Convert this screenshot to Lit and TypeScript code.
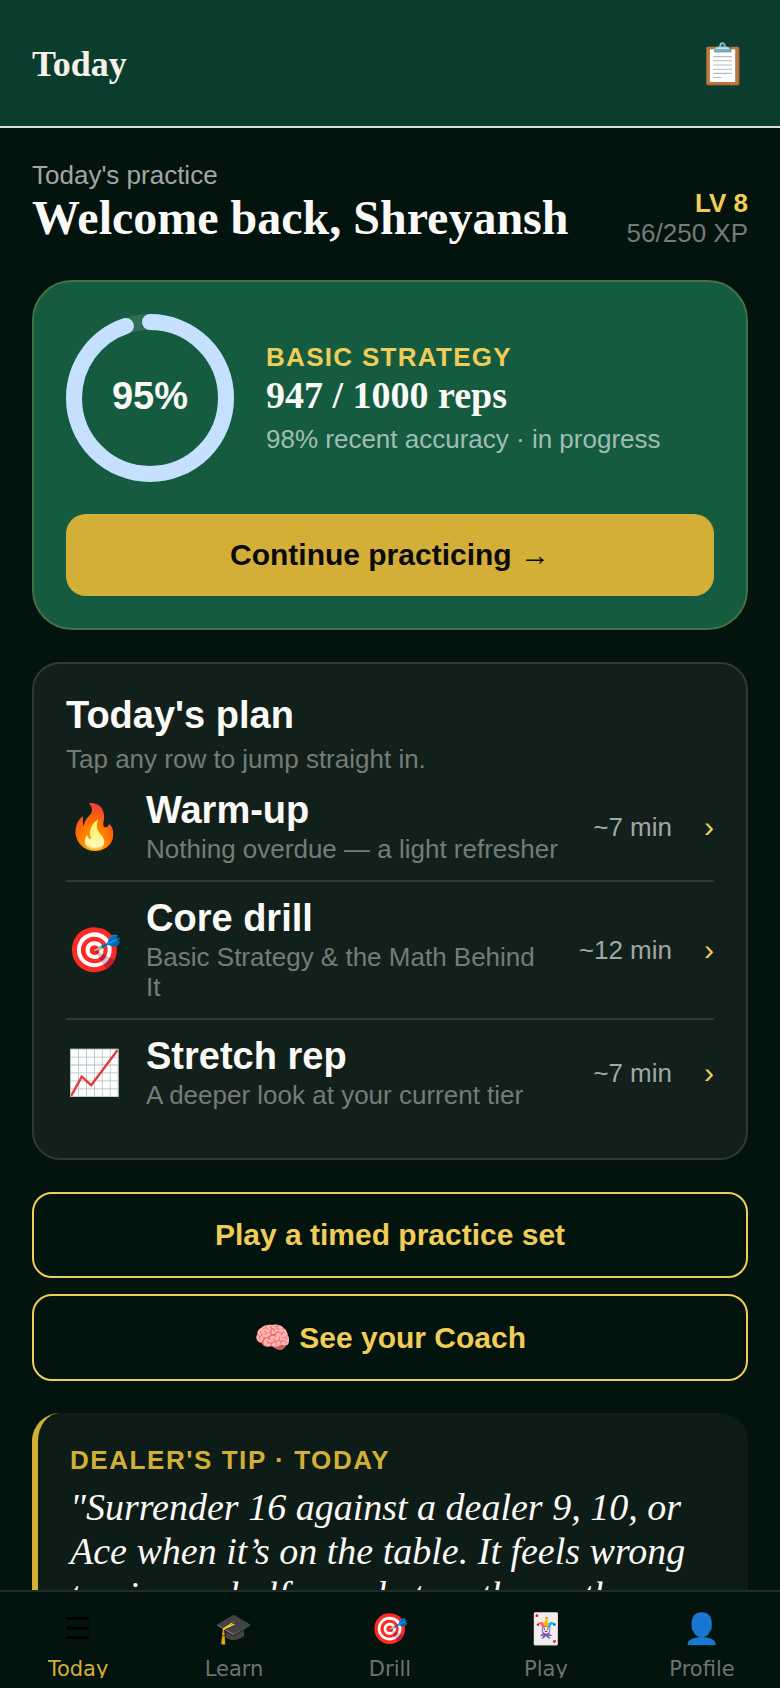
import { css, html, LitElement, nothing, svg } from "lit";
import { customElement, property } from "lit/decorators.js";

interface PlanItem {
  icon: string;
  title: string;
  detail: string;
  minutes: number;
}

interface Tab {
  icon: string;
  label: string;
}

const PLAN: PlanItem[] = [
  {
    icon: "🔥",
    title: "Warm-up",
    detail: "Nothing overdue — a light refresher",
    minutes: 7,
  },
  {
    icon: "🎯",
    title: "Core drill",
    detail: "Basic Strategy & the Math Behind It",
    minutes: 12,
  },
  {
    icon: "📈",
    title: "Stretch rep",
    detail: "A deeper look at your current tier",
    minutes: 7,
  },
];

const TABS: Tab[] = [
  { icon: "☰", label: "Today" },
  { icon: "🎓", label: "Learn" },
  { icon: "🎯", label: "Drill" },
  { icon: "🃏", label: "Play" },
  { icon: "👤", label: "Profile" },
];

@customElement("progress-ring")
export class ProgressRing extends LitElement {
  @property({ type: Number }) value = 0;
  @property({ type: Number }) total = 100;

  static override styles = css`
    :host {
      display: grid;
      flex: none;
      width: 168px;
      height: 168px;
    }
    svg,
    .label {
      grid-area: 1 / 1;
    }
    .track,
    .bar {
      fill: none;
      stroke-width: 16;
    }
    .track {
      stroke: rgba(255, 255, 255, 0.12);
    }
    .bar {
      stroke: #c5e1ff;
      stroke-linecap: round;
    }
    .label {
      place-self: center;
      padding-bottom: 4px;
      font-size: 38px;
      font-weight: 700;
      line-height: 44px;
    }
  `;

  override render() {
    const ratio = this.value / this.total;
    const length = 2 * Math.PI * 76;
    return html`
      <svg viewBox="0 0 168 168" aria-hidden="true">
        ${svg`
          <circle class="track" cx="84" cy="84" r="76" />
          <circle
            class="bar"
            cx="84"
            cy="84"
            r="76"
            transform="rotate(-90 84 84)"
            stroke-dasharray="${length * ratio} ${length}"
          />
        `}
      </svg>
      <span class="label">${Math.round(ratio * 100)}%</span>
    `;
  }
}

@customElement("plan-list")
export class PlanList extends LitElement {
  @property({ attribute: false }) items: PlanItem[] = [];

  static override styles = css`
    ul {
      margin: 0;
      padding: 0;
      list-style: none;
    }
    li + li {
      border-top: 2px solid #2d3a35;
    }
    .row {
      display: flex;
      align-items: center;
      box-sizing: border-box;
      width: 100%;
      padding: 16px 0;
      border: 0;
      background: none;
      color: inherit;
      font: inherit;
      text-align: left;
      cursor: pointer;
    }
    li:first-child .row {
      padding-top: 0;
    }
    .icon {
      flex: none;
      width: 56px;
      font-size: 44px;
      line-height: 48px;
      text-align: center;
    }
    .text {
      flex: 1;
      display: flex;
      flex-direction: column;
      gap: 4px;
      margin: 0 32px 0 24px;
    }
    .title {
      font-size: 38px;
      font-weight: 700;
      line-height: 40px;
    }
    .detail {
      color: #737c78;
      font-size: 26px;
      line-height: 30px;
    }
    .time {
      color: #a1a7a5;
      font-size: 26px;
      line-height: 30px;
    }
    .chevron {
      margin-left: 32px;
      color: #f0cc58;
      font-size: 30px;
      line-height: 34px;
    }
  `;

  override render() {
    return html`
      <ul>
        ${this.items.map(
          (item) => html`
            <li>
              <button class="row">
                <span class="icon">${item.icon}</span>
                <span class="text">
                  <span class="title">${item.title}</span>
                  <span class="detail">${item.detail}</span>
                </span>
                <span class="time">~${item.minutes} min</span>
                <span class="chevron">›</span>
              </button>
            </li>
          `,
        )}
      </ul>
    `;
  }
}

@customElement("tab-bar")
export class TabBar extends LitElement {
  @property({ attribute: false }) tabs: Tab[] = [];
  @property() current = "";

  static override styles = css`
    :host {
      display: block;
      border-top: 2px solid #1f2d28;
      background: #03130e;
    }
    nav {
      display: grid;
      grid-template-columns: repeat(5, 1fr);
      padding: 16px 0 10px;
    }
    a {
      display: flex;
      flex-direction: column;
      align-items: center;
      gap: 6px;
      color: #6b7571;
      font-family: "DejaVu Sans", sans-serif;
      text-decoration: none;
    }
    a[aria-current] {
      color: #d4af37;
    }
    .icon {
      color: #000;
      font-family: "Noto Color Emoji", "DejaVu Sans", sans-serif;
      font-size: 30px;
      line-height: 42px;
    }
    .label {
      height: 22px;
      overflow: hidden;
      font-size: 21px;
      line-height: 26px;
    }
  `;

  override render() {
    return html`
      <nav>
        ${this.tabs.map(
          (tab) => html`
            <a
              href="#${tab.label.toLowerCase()}"
              aria-current=${tab.label === this.current ? "page" : nothing}
            >
              <span class="icon">${tab.icon}</span>
              <span class="label">${tab.label}</span>
            </a>
          `,
        )}
      </nav>
    `;
  }
}

@customElement("app-root")
export class AppRoot extends LitElement {
  static override styles = css`
    :host {
      display: flex;
      flex-direction: column;
      height: 100vh;
      background: #03130e;
      color: #faf9f6;
      font-family: "Liberation Sans", Arial, sans-serif;
    }
    h1,
    h2,
    p {
      margin: 0;
    }
    button {
      cursor: pointer;
      font-family: inherit;
    }
    .top {
      display: flex;
      align-items: center;
      justify-content: space-between;
      padding: 32px 32px 30px;
      border-bottom: 2px solid #d8dedb;
      background: #0b3d2e;
    }
    .top h1 {
      color: #f5f1e6;
      font-family: "Liberation Serif", serif;
      font-size: 36px;
      line-height: 64px;
    }
    .log {
      padding: 0;
      border: 0;
      background: none;
      font-size: 40px;
      line-height: 48px;
    }
    main {
      flex: 1;
      min-height: 0;
      overflow: hidden;
      padding: 32px 32px 0;
    }
    .muted {
      color: #737c78;
      font-size: 26px;
      line-height: 30px;
    }
    .greeting {
      display: flex;
      align-items: flex-end;
      justify-content: space-between;
      margin-bottom: 32px;
    }
    .greeting p {
      color: #a1a7a5;
    }
    .greeting h2 {
      padding-bottom: 2px;
      font-family: "Liberation Serif", serif;
      font-size: 48px;
      line-height: 56px;
    }
    .level {
      display: flex;
      flex-direction: column;
      text-align: right;
    }
    .level strong {
      color: #f0cc58;
      font-size: 26px;
      line-height: 30px;
    }
    .card {
      padding: 32px;
      border: 2px solid #2d3a35;
      border-radius: 28px;
      background: #12201b;
    }
    .progress {
      border-color: #46703f;
      border-radius: 40px;
      background: #155b40;
    }
    .summary {
      display: flex;
      align-items: center;
      gap: 32px;
      margin-bottom: 32px;
    }
    .overline {
      color: #f0cc58;
      font-size: 26px;
      font-weight: 700;
      letter-spacing: 0.05em;
      line-height: 30px;
      text-transform: uppercase;
    }
    .reps {
      font-family: "Liberation Serif", serif;
      font-size: 38px;
      font-weight: 700;
      line-height: 46px;
    }
    .summary .muted {
      margin-top: 6px;
      color: #a1bdb3;
    }
    .action {
      display: block;
      box-sizing: border-box;
      width: 100%;
      padding: 24px;
      border: 2px solid #f0cc58;
      border-radius: 20px;
      background: none;
      color: #f0cc58;
      font-size: 30px;
      font-weight: 700;
      line-height: normal;
    }
    .primary {
      border: 0;
      background: #d4af37;
      color: #0a0a0a;
    }
    .plan {
      margin: 32px 0;
    }
    .plan h2 {
      margin-bottom: 10px;
      font-size: 38px;
      line-height: 38px;
    }
    .plan .muted {
      margin-bottom: 16px;
    }
    .action + .action {
      margin-top: 16px;
    }
    .tip {
      margin-top: 32px;
      border-width: 0 0 0 6px;
      border-color: #d4af37;
      background: #0d1c17;
    }
    .tip .overline {
      color: #d4af37;
      letter-spacing: 0.06em;
    }
    .quote {
      margin-top: 10px;
      font-family: "Liberation Serif", serif;
      font-size: 38px;
      font-style: italic;
      line-height: 44px;
    }
  `;

  override render() {
    return html`
      <header class="top">
        <h1>Today</h1>
        <button class="log" aria-label="Practice log">📋</button>
      </header>
      <main>
        <section class="greeting">
          <div>
            <p class="muted">Today's practice</p>
            <h2>Welcome back, Shreyansh</h2>
          </div>
          <div class="level">
            <strong>LV 8</strong>
            <span class="muted">56/250 XP</span>
          </div>
        </section>
        <section class="card progress">
          <div class="summary">
            <progress-ring .value=${947} .total=${1000}></progress-ring>
            <div>
              <p class="overline">Basic Strategy</p>
              <p class="reps">947 / 1000 reps</p>
              <p class="muted">98% recent accuracy · in progress</p>
            </div>
          </div>
          <button class="action primary">Continue practicing →</button>
        </section>
        <section class="card plan">
          <h2>Today's plan</h2>
          <p class="muted">Tap any row to jump straight in.</p>
          <plan-list .items=${PLAN}></plan-list>
        </section>
        <button class="action">Play a timed practice set</button>
        <button class="action">🧠 See your Coach</button>
        <section class="card tip">
          <p class="overline">Dealer's tip · Today</p>
          <p class="quote">
            "Surrender 16 against a dealer 9, 10, or Ace when it’s on the table.
            It feels wrong to give up half your bet on the math
            recommendation."
          </p>
        </section>
      </main>
      <tab-bar .tabs=${TABS} current="Today"></tab-bar>
    `;
  }
}
